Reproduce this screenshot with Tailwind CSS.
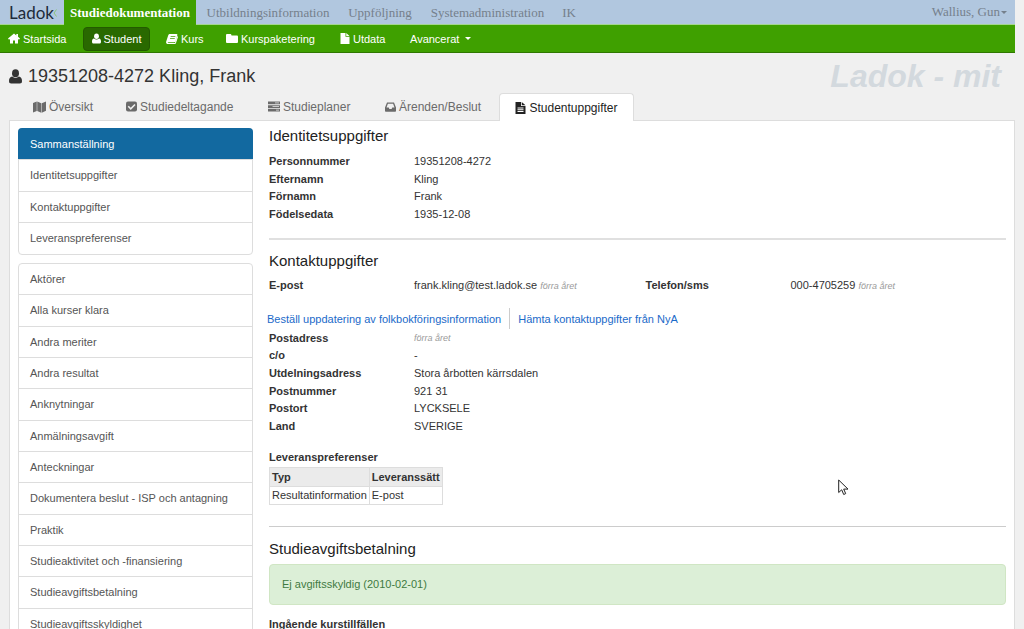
<!DOCTYPE html>
<html lang="sv" class="[scrollbar-width:none]">
<head>
<meta charset="utf-8">
<meta name="viewport" content="width=device-width, initial-scale=1">
<title>Ladok - Studentuppgifter</title>
<script src="https://cdn.jsdelivr.net/npm/@tailwindcss/browser@4"></script>
</head>
<body class="min-h-screen bg-[#f0f0f0] pr-[9px] font-['Liberation_Sans',Arial,sans-serif] text-[11px] leading-4 text-[#333]">

<header>
  <div class="flex h-[25px] items-stretch border-b border-[#a5d68f] bg-[#b1c7df] font-['Liberation_Serif','Times_New_Roman',serif] text-[13px] text-[#75808c]">
    <a href="#" class="flex w-16 items-center pt-px pl-[9px] font-['Lato',sans-serif] text-[17px] text-[#1d2b3a]">Ladok
      <svg class="-ml-px h-[8px] w-[4px]" viewBox="0 0 4 8" fill="none" stroke="#8cc47a" aria-hidden="true"><path d="M3.500.5 1 4l2.500 3.500"/></svg></a>
    <nav class="-mb-px flex items-stretch" aria-label="Huvudmeny">
      <a href="#" class="flex w-[132px] items-center justify-center bg-[#3fa000] font-bold text-white">Studiedokumentation</a>
      <a href="#" class="flex w-[144px] items-center justify-center">Utbildningsinformation</a>
      <a href="#" class="flex w-20 items-center justify-center">Uppföljning</a>
      <a href="#" class="flex w-[135px] items-center justify-center">Systemadministration</a>
      <a href="#" class="flex w-7 items-center justify-center">IK</a>
    </nav>
    <button type="button" class="ml-auto flex items-center gap-px pr-2">Wallius, Gun
      <svg class="h-[3px] w-[6px]" viewBox="0 0 6 3" fill="currentColor"><path d="M0 0h6L3 3z"/></svg>
    </button>
  </div>

  <nav class="flex h-7 items-center border-b border-[#2f7800] bg-[#3fa000] pl-2 text-white" aria-label="Studiedokumentation">
    <a href="#" class="flex w-[75px] items-center gap-[3px]">
      <svg class="h-[11px] w-3" viewBox="0 0 24 22" fill="currentColor"><path d="M12 1 0 11l2 2.500L4 12v9h6v-6h4v6h6v-9l2 1.500 2-2.500-4-3.400V2h-3.400v2.800z"/></svg>Startsida</a>
    <a href="#" class="flex h-6 w-[67px] items-center justify-center gap-[3px] rounded border border-[#235a00] bg-[#296900]" aria-current="page">
      <svg class="h-[11px] w-[9px]" viewBox="0 0 18 22" fill="currentColor"><ellipse cx="9" cy="6.500" rx="4.800" ry="5.500"/><path d="M4 11c-3 .5-4 3-4 6.500C0 20 1 21 3 21h12c2 0 3-1 3-3.500 0-3.500-1-6-4-6.500-3 2.500-7 2.500-10 0z"/></svg>Student</a>
    <a href="#" class="ml-4 flex w-[60px] items-center gap-[3px]">
      <svg class="h-[11px] w-3" viewBox="0 0 24 22" fill="currentColor"><path fill-rule="evenodd" d="M8 2h13c2 0 2 1 1.600 2.500l-3.600 12c-.4 1.300-1 1.800-2.500 1.800H5c-1.500 0-2 .7-1.500 1.300.3.500 1 .6 2 .6H18l4.500-14c1.500.8 1.600 1.800 1.200 3L20 20c-.4 1.300-1.300 2-3 2H4c-3 0-4.500-2.500-3.600-5L4.500 4.500C5.200 2.800 6.200 2 8 2zm1.500 4-.5 1.600h9.500L19 6zm-1.200 4-.5 1.600h9.500l.5-1.600z"/></svg>Kurs</a>
    <a href="#" class="flex w-[114px] items-center gap-[3px]">
      <svg class="h-[11px] w-3" viewBox="0 0 24 22" fill="currentColor"><path d="M2.500 2h6C10 2 11 3 11 5h10.500C23 5 24 6 24 7.500v10c0 1.500-1 2.500-2.500 2.500h-19C1 20 0 19 0 17.500v-13C0 3 1 2 2.500 2z"/></svg>Kurspaketering</a>
    <a href="#" class="flex w-[70px] items-center gap-[3px]">
      <svg class="h-[11px] w-[10px]" viewBox="0 0 20 22" fill="currentColor"><path d="M1 0h10v7.500h8V22H1zM12.500 0 19 6h-6.500z"/></svg>Utdata</a>
    <button type="button" class="flex items-center gap-[6px]">Avancerat
      <svg class="h-[3px] w-[6px]" viewBox="0 0 6 3" fill="currentColor"><path d="M0 0h6L3 3z"/></svg></button>
  </nav>
</header>

<div class="flex h-10 items-center justify-between pt-[6px] pr-[14px] pl-[9px]">
  <h1 class="flex items-center gap-[6px] text-[18px]">
    <svg class="h-[15px] w-[13px]" viewBox="0 0 26 30" fill="currentColor"><ellipse cx="13" cy="8.500" rx="7" ry="8"/><path d="M6.500 15C2 15.500 0 19 0 24c0 3.500 1.500 5 4.500 5h17c3 0 4.500-1.500 4.500-5 0-5-2-8.500-6.500-9-4 3.800-9 3.800-13 0z"/></svg>
    19351208-4272 Kling, Frank</h1>
  <div class="text-[32px] leading-8 font-bold text-[#d3d9de] italic">Ladok - mit</div>
</div>

<nav class="flex h-[27px] items-center pl-[33px] text-[12px] text-[#6b6b6b]" aria-label="Student">
  <a href="#" class="flex w-[93px] items-center gap-[3px]">
    <svg class="h-3 w-[13px]" viewBox="0 0 26 24" fill="currentColor"><path d="M0 4l7.500-3v19L0 23zM8.500 1l8 3.500v19l-8-3.500zM17.500 4.500 26 1v18.500l-8.500 4z"/></svg>Översikt</a>
  <a href="#" class="flex w-[142px] items-center gap-[3px]">
    <svg class="h-[11px] w-[11px]" viewBox="0 0 22 22"><rect x="0" y="1" width="22" height="20" rx="4" fill="currentColor"/><path d="M4.500 10.500 9.500 15.500 18 7" fill="none" stroke="#f0f0f0" stroke-width="3.200"/></svg>Studiedeltagande</a>
  <a href="#" class="flex w-[117px] items-center gap-[3px]">
    <svg class="h-[11px] w-3" viewBox="0 0 24 22"><path fill="currentColor" d="M0 1h24v5.500H0zM0 8.300h24v5.500H0zM0 15.600h24V21H0z"/><path d="M14 3.800h8M9 11h13M16 18.300h6" stroke="#f0f0f0" stroke-width="1.400"/></svg>Studieplaner</a>
  <a href="#" class="flex w-[114px] items-center gap-[3px]">
    <svg class="h-[10px] w-[11px]" viewBox="0 0 22 20" fill="currentColor"><path fill-rule="evenodd" d="M4 1h14l4 10v7c0 1-.6 1.600-1.600 1.600H1.600C.6 19.600 0 19 0 18v-7zm1.800 2.600L3 11h4.500l1.300 3h4.400l1.300-3H19l-2.800-7.400z"/></svg>Ärenden/Beslut</a>
  <a href="#" class="z-10 -mb-px flex h-7 w-[135px] items-center justify-center gap-[3px] rounded-t border border-b-0 border-[#ddd] bg-white text-[#222]" aria-current="page">
    <svg class="h-3 w-[11px]" viewBox="0 0 22 24" fill="currentColor"><path fill-rule="evenodd" d="M1 0h11v8h9v16H1zM13.500 0 21 6.500h-7.500zM5 11v1.800h12V11zm0 3.600v1.800h12v-1.800zm0 3.600V20h12v-1.800z"/></svg>Studentuppgifter</a>
</nav>

<div class="ml-[9px] flex min-h-[508px] items-start gap-4 border border-[#ddd] bg-white p-2 pt-[7px] pb-0">
  <aside class="flex w-[235px] shrink-0 flex-col gap-2 text-[#555]">
    <ul class="grid min-h-[127px] auto-rows-fr divide-y divide-[#ddd] rounded border border-[#ddd]">
      <li class="-mx-px -mt-px grid rounded-t bg-[#1269a0] text-white"><a href="#" class="flex items-center px-3" aria-current="page">Sammanställning</a></li>
      <li class="grid"><a href="#" class="flex items-center px-[11px]">Identitetsuppgifter</a></li>
      <li class="grid"><a href="#" class="flex items-center px-[11px]">Kontaktuppgifter</a></li>
      <li class="grid"><a href="#" class="flex items-center px-[11px]">Leveranspreferenser</a></li>
    </ul>
    <ul class="grid min-h-[378px] auto-rows-fr divide-y divide-[#ddd] rounded border border-[#ddd]">
      <li class="grid"><a href="#" class="flex items-center px-[11px]">Aktörer</a></li>
      <li class="grid"><a href="#" class="flex items-center px-[11px]">Alla kurser klara</a></li>
      <li class="grid"><a href="#" class="flex items-center px-[11px]">Andra meriter</a></li>
      <li class="grid"><a href="#" class="flex items-center px-[11px]">Andra resultat</a></li>
      <li class="grid"><a href="#" class="flex items-center px-[11px]">Anknytningar</a></li>
      <li class="grid"><a href="#" class="flex items-center px-[11px]">Anmälningsavgift</a></li>
      <li class="grid"><a href="#" class="flex items-center px-[11px]">Anteckningar</a></li>
      <li class="grid"><a href="#" class="flex items-center px-[11px]">Dokumentera beslut - ISP och antagning</a></li>
      <li class="grid"><a href="#" class="flex items-center px-[11px]">Praktik</a></li>
      <li class="grid"><a href="#" class="flex items-center px-[11px]">Studieaktivitet och -finansiering</a></li>
      <li class="grid"><a href="#" class="flex items-center px-[11px]">Studieavgiftsbetalning</a></li>
      <li class="grid"><a href="#" class="flex items-center px-[11px]">Studieavgiftsskyldighet</a></li>
    </ul>
  </aside>

  <main class="min-w-0 flex-1">
    <section class="border-b-2 border-[#e0e0e0] pb-[15px]">
      <h2 class="text-[15px] leading-4 text-[#222]">Identitetsuppgifter</h2>
      <dl class="mt-2 grid min-h-[71px] auto-rows-fr grid-cols-[145px_1fr] items-center">
        <dt class="font-bold">Personnummer</dt><dd>19351208-4272</dd>
        <dt class="font-bold">Efternamn</dt><dd>Kling</dd>
        <dt class="font-bold">Förnamn</dt><dd>Frank</dd>
        <dt class="font-bold">Födelsedata</dt><dd>1935-12-08</dd>
      </dl>
    </section>

    <section class="border-b border-[#ccc] pb-[21px]">
      <h2 class="pt-[13px] text-[15px] leading-4 text-[#222]">Kontaktuppgifter</h2>
      <dl class="mt-2 grid grid-cols-2 gap-4">
        <div class="grid grid-cols-[145px_1fr]"><dt class="font-bold">E-post</dt><dd>frank.kling@test.ladok.se <small class="text-[9px] text-[#999] italic">förra året</small></dd></div>
        <div class="grid grid-cols-[145px_1fr]"><dt class="font-bold">Telefon/sms</dt><dd>000-4705259 <small class="text-[9px] text-[#999] italic">förra året</small></dd></div>
      </dl>
      <div class="mt-[14px] -ml-[2px] flex h-[21px] text-[#1b6ac9]">
        <a href="#" class="flex items-center border-r border-[#ccc] pr-2">Beställ uppdatering av folkbokföringsinformation</a>
        <a href="#" class="flex items-center pl-2">Hämta kontaktuppgifter från NyA</a>
      </div>
      <dl class="grid min-h-[106px] auto-rows-fr grid-cols-[145px_1fr] items-center">
        <dt class="font-bold">Postadress</dt><dd><small class="text-[9px] text-[#999] italic">förra året</small></dd>
        <dt class="font-bold">c/o</dt><dd>-</dd>
        <dt class="font-bold">Utdelningsadress</dt><dd>Stora årbotten kärrsdalen</dd>
        <dt class="font-bold">Postnummer</dt><dd>921 31</dd>
        <dt class="font-bold">Postort</dt><dd>LYCKSELE</dd>
        <dt class="font-bold">Land</dt><dd>SVERIGE</dd>
      </dl>
      <h3 id="lev" class="mt-[14px] font-bold">Leveranspreferenser</h3>
      <table class="mt-[2px] border-collapse text-left" aria-labelledby="lev">
        <thead class="bg-[#ebebeb]"><tr><th class="border border-[#ddd] px-[2px] py-px font-bold">Typ</th><th class="border border-[#ddd] px-[2px] py-px font-bold">Leveranssätt</th></tr></thead>
        <tbody class="leading-[15px]"><tr><td class="border border-[#ddd] px-[2px] py-px">Resultatinformation</td><td class="border border-[#ddd] px-[2px] py-px">E-post</td></tr></tbody>
      </table>
    </section>

    <section>
      <h2 class="pt-[14px] text-[15px] leading-4 text-[#222]">Studieavgiftsbetalning</h2>
      <div role="status" class="mt-[7px] rounded border border-[#d0e6c4] bg-[#dcefd7] px-3 py-3 leading-[15px] text-[#3f7a42]">Ej avgiftsskyldig (2010-02-01)</div>
      <h3 class="mt-[11px] font-bold">Ingående kurstillfällen</h3>
    </section>
  </main>
</div>

<svg class="pointer-events-none absolute top-[479px] left-[838px] h-[17px] w-[11px]" viewBox="0 0 11 17" aria-hidden="true"><path d="M.7 1v12.500l3-2.700 2 4.700 2-.9-2-4.500H10z" fill="#fff" stroke="#222" stroke-width="1"/></svg>
</body>
</html>
